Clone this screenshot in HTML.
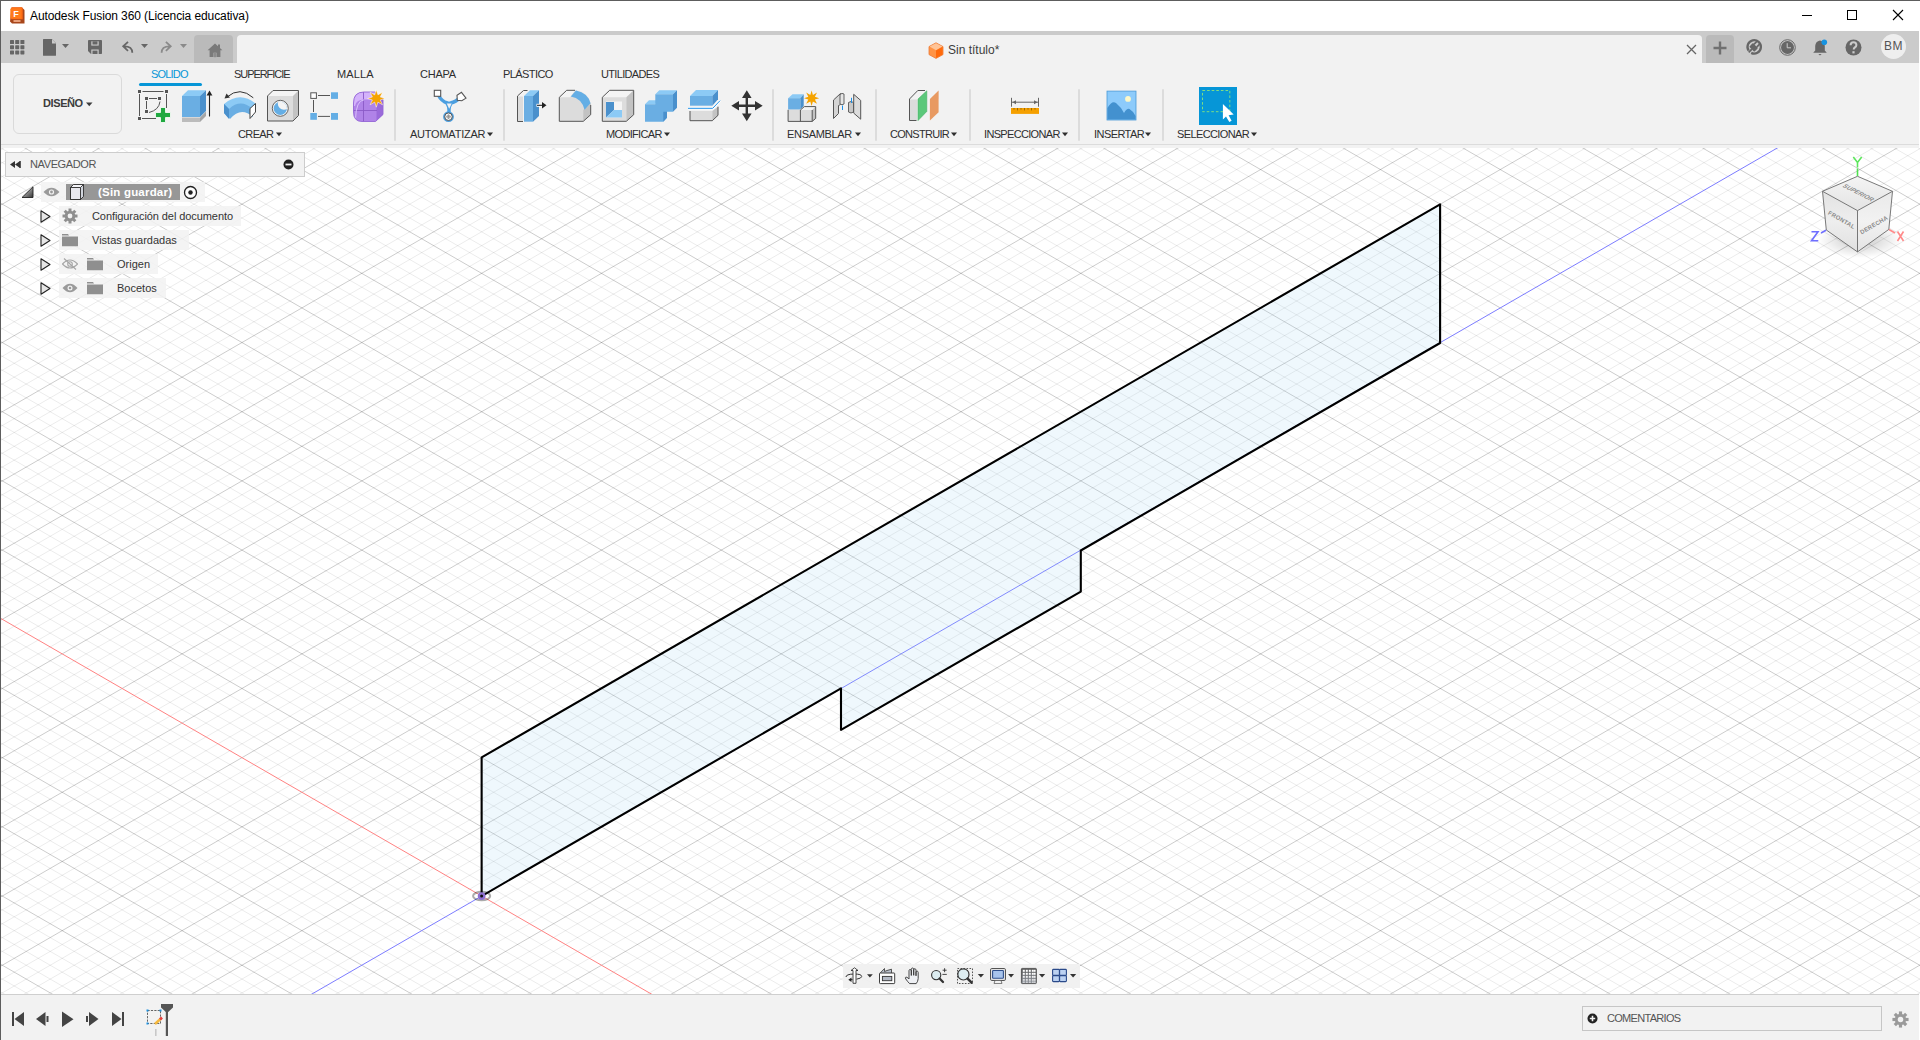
<!DOCTYPE html>
<html><head><meta charset="utf-8">
<style>
*{box-sizing:border-box;margin:0;padding:0}
html,body{width:1920px;height:1040px;overflow:hidden;background:#fff;font-family:"Liberation Sans",sans-serif;color:#2e2e2e}
.a{position:absolute}
#titlebar{left:0;top:0;width:1920px;height:31px;background:#fff;border-top:1px solid #5d5d5d;border-left:1px solid #5d5d5d}
#tabbar{left:1px;top:31px;width:1918px;height:32px;background:#cbcbcb}
#toolbar{left:1px;top:63px;width:1918px;height:82px;background:#f2f2f2;border-bottom:1px solid #dcdcdc}
#vpgap{left:1px;top:145px;width:1918px;height:3px;background:#f2f2f2}
#viewport{left:1px;top:148px;width:1919px;height:846px;background:#fff;overflow:hidden}
#bottombar{left:1px;top:994px;width:1918px;height:46px;background:#f2f2f2;border-top:1px solid #cfcfcf}
#leftborder{left:0;top:0;width:1px;height:1040px;background:#5d5d5d}
.t{position:absolute;white-space:nowrap;line-height:1}
</style></head><body>
<div id="titlebar" class="a"></div>
<div id="tabbar" class="a"></div>
<div id="toolbar" class="a"></div>
<div id="vpgap" class="a"></div>
<!-- TITLE BAR -->
<svg class="a" style="left:10px;top:7px" width="15" height="17" viewBox="0 0 15 17">
<path d="M1.5 0.5h10.5l2.5 2.5v13.5h-12.5l-2-2z" fill="#a8461a"/>
<path d="M1.2 1.2q0-1 1-1h9.5q1 0 1 1v11h-11.5z" fill="#ff6a13"/>
<path d="M0.3 2.5q0-1.2 1.2-1.2h9.8v10.2h-11z" fill="#ff7a1a"/>
<text x="6" y="9.8" font-family="Liberation Sans" font-weight="bold" font-size="9" fill="#fff" text-anchor="middle">F</text>
<rect x="3.5" y="13" width="7" height="2" fill="#e9a07a"/>
</svg>
<div class="t" style="left:30px;top:10px;font-size:12px;letter-spacing:-0.1px;color:#000">Autodesk Fusion 360 (Licencia educativa)</div>

<!-- TAB BAR -->
<svg class="a" style="left:10px;top:40px" width="15" height="15" viewBox="0 0 15 15" fill="#666">
<rect x="0" y="0" width="4" height="4" rx=".6"/><rect x="5.2" y="0" width="4" height="4" rx=".6"/><rect x="10.4" y="0" width="4" height="4" rx=".6"/>
<rect x="0" y="5.2" width="4" height="4" rx=".6"/><rect x="5.2" y="5.2" width="4" height="4" rx=".6"/><rect x="10.4" y="5.2" width="4" height="4" rx=".6"/>
<rect x="0" y="10.4" width="4" height="4" rx=".6"/><rect x="5.2" y="10.4" width="4" height="4" rx=".6"/><rect x="10.4" y="10.4" width="4" height="4" rx=".6"/>
</svg>
<svg class="a" style="left:43px;top:39px" width="28" height="17" viewBox="0 0 28 17" fill="#666">
<path d="M0.6 0.1h8.2l4.2 4.2v11.9q0 .6-.6.6h-11.8q-.6 0-.6-.6v-15.5q0-.6.6-.6z"/>
<path d="M9 0.2v4.2h4.2" fill="#cbcbcb"/>
<path d="M19 5h7l-3.5 4z"/>
</svg>
<svg class="a" style="left:88px;top:40px" width="15" height="15" viewBox="0 0 15 15" fill="#666">
<path d="M0 0.8q0-.8.8-.8h12.4q.8 0 .8.8v12.4q0 .8-.8.8h-10.2l-3-3z"/>
<rect x="3.3" y="1.3" width="7.4" height="4.3" fill="#cbcbcb"/><rect x="4.5" y="1.3" width="5" height="3.2" fill="#666"/>
<rect x="3.3" y="9.5" width="7.4" height="4.5" fill="#cbcbcb"/><rect x="4.5" y="10.6" width="5" height="3.4" fill="#666"/>
</svg>
<svg class="a" style="left:120px;top:40px" width="30" height="15" viewBox="0 0 30 15">
<path d="M12.3 12.8q0-6.5-8-6.5M8 1.8l-4.8 4.5 4.8 4.5" fill="none" stroke="#666" stroke-width="1.8"/>
<path d="M21 4h7l-3.5 4z" fill="#666"/>
</svg>
<svg class="a" style="left:160px;top:40px" width="30" height="15" viewBox="0 0 30 15">
<path d="M1.6 12.8q0-6.5 8-6.5M5.9 1.8l4.8 4.5-4.8 4.5" fill="none" stroke="#8a8a8a" stroke-width="1.8"/>
<path d="M20 4h7l-3.5 4z" fill="#8a8a8a"/>
</svg>
<div class="a" style="left:194px;top:35px;width:39px;height:28px;background:#bababa;border-radius:4px 4px 0 0"></div>
<svg class="a" style="left:207px;top:43px" width="16" height="15" viewBox="0 0 16 15" fill="#7a7a7a">
<path d="M8 0.6l7.4 6.6h-2v6.9h-3.9v-4.3h-3v4.3h-3.9v-6.9h-2z"/><rect x="11" y="1.5" width="2" height="3.5"/><rect x="6.8" y="10" width="2.4" height="4.2" fill="#8c8c8c"/>
</svg>
<div class="a" style="left:237px;top:35px;width:1465px;height:28px;background:#f2f2f2;border-radius:4px 4px 0 0"></div>
<svg class="a" style="left:928px;top:41.5px" width="16" height="17" viewBox="0 0 16 17">
<path d="M8 0.8l7 3.8v8l-7 3.8-7-3.8v-8z" fill="#ff9446" stroke="#ec7a36" stroke-width="0.8"/>
<path d="M8 1.2l6.4 3.4-6.4 3.6-6.4-3.6z" fill="#ffc497"/>
<path d="M8 8.4v7.7l6.6-3.6v-7.7z" fill="#ff6a0c"/>
</svg>
<div class="t" style="left:948px;top:44px;font-size:12px;color:#3c3c3c">Sin título*</div>
<svg class="a" style="left:1686px;top:44px" width="11" height="11" viewBox="0 0 11 11"><path d="M1 1L10 10M10 1L1 10" stroke="#666" stroke-width="1.3"/></svg>
<div class="a" style="left:1706px;top:35px;width:28px;height:28px;background:#bababa;border-radius:4px 4px 0 0"></div>
<svg class="a" style="left:1713px;top:41px" width="14" height="14" viewBox="0 0 14 14"><path d="M7 0.5v13M0.5 7h13" stroke="#707070" stroke-width="2.4"/></svg>
<svg class="a" style="left:1745px;top:38px" width="18" height="18" viewBox="0 0 18 18">
<path d="M3.6 12.6A6.7 6.7 0 1 1 6.2 14.9" fill="none" stroke="#666" stroke-width="2.3"/>
<g transform="rotate(45 9 9)"><rect x="5.4" y="7" width="7.2" height="5.2" rx="0.8" fill="#666"/><rect x="6.2" y="2.2" width="1.7" height="5" fill="#666"/><rect x="10.1" y="2.2" width="1.7" height="5" fill="#666"/><rect x="8.1" y="12" width="1.8" height="4.5" fill="#666"/></g>
</svg>
<svg class="a" style="left:1778.5px;top:38.5px" width="17" height="17" viewBox="0 0 17 17">
<circle cx="8.5" cy="8.5" r="7.8" fill="none" stroke="#666" stroke-width="1"/>
<circle cx="8.5" cy="8.5" r="6.5" fill="#666"/>
<path d="M8.2 4.2v4.6h3.8" fill="none" stroke="#cbcbcb" stroke-width="1"/>
</svg>
<svg class="a" style="left:1812px;top:38px" width="18" height="19" viewBox="0 0 18 19">
<path d="M8 2.5q-4.5.8-4.8 5.5v4.5l-2 2.2h13.6l-2-2.2v-4.5q-.3-4.7-4.8-5.5z" fill="#666"/>
<path d="M6.4 16h3.2l-1.6 1.6z" fill="#666"/>
<circle cx="12.3" cy="4.3" r="2.8" fill="#1793e0"/>
</svg>
<svg class="a" style="left:1844.5px;top:38.5px" width="17" height="17" viewBox="0 0 17 17">
<circle cx="8.5" cy="8.5" r="8" fill="#666"/>
<path d="M5.6 6.3q0-3 2.9-3t2.9 2.8q0 1.6-1.6 2.4-1.1.6-1.1 1.9" fill="none" stroke="#cbcbcb" stroke-width="2"/>
<rect x="7.4" y="12.2" width="2.2" height="2.2" fill="#cbcbcb"/>
</svg>
<div class="a" style="left:1881px;top:34px;width:25px;height:25px;border-radius:50%;background:#eeeeee"></div>
<div class="t" style="left:1882px;top:40px;width:23px;text-align:center;font-size:12px;color:#555;letter-spacing:.5px">BM</div>

<!-- TOOLBAR -->
<div class="a" style="left:13px;top:74px;width:109px;height:60px;border:1.5px solid #dadada;border-radius:6px"></div>
<div class="t" style="left:43px;top:98px;font-size:11px;font-weight:bold;letter-spacing:-0.4px;color:#3c3c3c">DISEÑO</div>
<svg class="a" style="left:86px;top:102px" width="7" height="5" viewBox="0 0 7 5"><path d="M0 0.5h6.5l-3.25 3.8z" fill="#3c3c3c"/></svg>
<div class="t" style="left:151px;top:69px;font-size:11px;letter-spacing:-0.8px;color:#0696d7">SOLIDO</div>
<div class="t" style="left:234px;top:69px;font-size:11px;letter-spacing:-1.06px">SUPERFICIE</div>
<div class="t" style="left:337px;top:69px;font-size:11px;letter-spacing:0.13px">MALLA</div>
<div class="t" style="left:420px;top:69px;font-size:11px;letter-spacing:-0.25px">CHAPA</div>
<div class="t" style="left:503px;top:69px;font-size:11px;letter-spacing:-0.57px">PLÁSTICO</div>
<div class="t" style="left:601px;top:69px;font-size:11px;letter-spacing:-0.67px">UTILIDADES</div>
<div class="a" style="left:139px;top:83px;width:63px;height:3px;background:#0696d7;border-radius:1.5px"></div>
<div class="t" style="left:238px;top:129px;font-size:11px;letter-spacing:-0.63px">CREAR</div>
<svg class="a" style="left:276.25px;top:131.5px" width="7" height="5" viewBox="0 0 7 5"><path d="M0 0.5h6l-3 3.7z" fill="#2e2e2e"/></svg>
<div class="t" style="left:410px;top:129px;font-size:11px;letter-spacing:-0.23px">AUTOMATIZAR</div>
<svg class="a" style="left:487.20px;top:131.5px" width="7" height="5" viewBox="0 0 7 5"><path d="M0 0.5h6l-3 3.7z" fill="#2e2e2e"/></svg>
<div class="t" style="left:606px;top:129px;font-size:11px;letter-spacing:-0.67px">MODIFICAR</div>
<svg class="a" style="left:663.60px;top:131.5px" width="7" height="5" viewBox="0 0 7 5"><path d="M0 0.5h6l-3 3.7z" fill="#2e2e2e"/></svg>
<div class="t" style="left:787px;top:129px;font-size:11px;letter-spacing:-0.32px">ENSAMBLAR</div>
<svg class="a" style="left:854.50px;top:131.5px" width="7" height="5" viewBox="0 0 7 5"><path d="M0 0.5h6l-3 3.7z" fill="#2e2e2e"/></svg>
<div class="t" style="left:890px;top:129px;font-size:11px;letter-spacing:-0.71px">CONSTRUIR</div>
<svg class="a" style="left:951.20px;top:131.5px" width="7" height="5" viewBox="0 0 7 5"><path d="M0 0.5h6l-3 3.7z" fill="#2e2e2e"/></svg>
<div class="t" style="left:984px;top:129px;font-size:11px;letter-spacing:-0.67px">INSPECCIONAR</div>
<svg class="a" style="left:1061.60px;top:131.5px" width="7" height="5" viewBox="0 0 7 5"><path d="M0 0.5h6l-3 3.7z" fill="#2e2e2e"/></svg>
<div class="t" style="left:1094px;top:129px;font-size:11px;letter-spacing:-0.56px">INSERTAR</div>
<svg class="a" style="left:1145.30px;top:131.5px" width="7" height="5" viewBox="0 0 7 5"><path d="M0 0.5h6l-3 3.7z" fill="#2e2e2e"/></svg>
<div class="t" style="left:1177px;top:129px;font-size:11px;letter-spacing:-0.62px">SELECCIONAR</div>
<svg class="a" style="left:1251.00px;top:131.5px" width="7" height="5" viewBox="0 0 7 5"><path d="M0 0.5h6l-3 3.7z" fill="#2e2e2e"/></svg>
<div class="a" style="left:394px;top:89px;width:2px;height:52px;background:#dcdcdc;border-radius:1px"></div>
<div class="a" style="left:503px;top:89px;width:2px;height:52px;background:#dcdcdc;border-radius:1px"></div>
<div class="a" style="left:772px;top:89px;width:2px;height:52px;background:#dcdcdc;border-radius:1px"></div>
<div class="a" style="left:875px;top:89px;width:2px;height:52px;background:#dcdcdc;border-radius:1px"></div>
<div class="a" style="left:969px;top:89px;width:2px;height:52px;background:#dcdcdc;border-radius:1px"></div>
<div class="a" style="left:1078px;top:89px;width:2px;height:52px;background:#dcdcdc;border-radius:1px"></div>
<div class="a" style="left:1162px;top:89px;width:2px;height:52px;background:#dcdcdc;border-radius:1px"></div>
<!-- ICONS -->
<svg class="a" style="left:0;top:63px" width="1300" height="82" viewBox="0 63 1300 82">
<!-- sketch -->
<g fill="#555">
<rect x="138" y="90" width="3" height="3"/><rect x="165" y="90" width="3" height="3"/><rect x="138" y="117" width="3" height="3"/>
<rect x="145" y="97" width="3" height="3"/><rect x="158" y="97" width="3" height="3"/><rect x="145" y="110" width="3" height="3"/>
</g>
<path d="M142.5 91.5H163.5M139.5 94V116M166.5 94V108M142 118.5H156M149 98.5H157M146.5 101V109M160 101.5Q159 110 149 112.5" fill="none" stroke="#555" stroke-width="1"/>
<path d="M160.5 107.5h5v5h5v5h-5v5h-5v-5h-5v-5h5z" fill="#1fa83f" stroke="#fff" stroke-width="0.8"/>
<!-- extrude -->
<path d="M182 96L188 90.2H206L200 96Z" fill="#8ccaf5"/>
<path d="M182 96H200V117H182Z" fill="#6aaee3"/>
<path d="M200 96L206 90.2V111L200 117Z" fill="#4a90cc"/>
<path d="M182 117.5H200V122H182Z" fill="#bcbcbc"/>
<path d="M200 117.5L206 111.5V116L200 122Z" fill="#a5a5a5"/>
<path d="M209.5 116.5V94" stroke="#222" stroke-width="1.1"/>
<path d="M206.6 95.5L209.5 90.5L212.4 95.5Z" fill="#222"/>
<!-- revolve -->
<path d="M253.3 97.8Q240 86 227 97" fill="none" stroke="#333" stroke-width="1"/>
<path d="M224.5 98.5L226.5 93.5L230 97.5Z" fill="#333"/>
<path d="M224 104Q240 91 255.5 103.5L253 112Q241 100 229 112.5L224 108Z" fill="#8ccaf5"/>
<path d="M224 104L229 109Q241 98 253 109.5V117Q241 106 230 119L224 113Z" fill="#6aaee3"/>
<path d="M224 104L229 109V119L224 113Z" fill="#4a90cc"/>
<path d="M250 108.5L255.5 103.5V112L250 118.5Z" fill="#fff" stroke="#444" stroke-width="1"/>
<!-- hole -->
<path d="M267.5 96L273 90.5H298.5L293 96Z" fill="#f4f4f4"/>
<path d="M267.5 96H293V121H267.5Z" fill="#dcdcdc"/>
<path d="M293 96L298.5 90.5V115.5L293 121Z" fill="#c3c3c3"/>
<path d="M267.5 96L273 90.5H298.5V115.5L293 121H267.5Z" fill="none" stroke="#555" stroke-width="1" stroke-linejoin="round"/>
<circle cx="280.3" cy="108.3" r="8" fill="#f4f4f4" stroke="#555" stroke-width="0.9"/>
<clipPath id="hc"><circle cx="280.3" cy="108.3" r="6.6"/></clipPath>
<circle cx="280.3" cy="108.3" r="6.6" fill="#64aee5"/>
<circle cx="284" cy="103.6" r="6.2" fill="#f4f4f4" clip-path="url(#hc)"/>
<!-- pattern -->
<path d="M318 95.5H330M318 116.4H330M313.5 100V112" stroke="#555" stroke-width="1"/>
<rect x="310.8" y="92.8" width="5.6" height="5.6" fill="#fff" stroke="#555" stroke-width="1"/>
<rect x="331" y="92.3" width="7" height="6.6" fill="#64aee5"/>
<rect x="310.3" y="113" width="6.6" height="6.8" fill="#64aee5"/>
<rect x="331" y="113" width="7" height="6.8" fill="#64aee5"/>
<!-- form -->
<clipPath id="fc"><path d="M353.5 103Q353.5 92 364 92H375L383 99.5V114.5L375.5 121.5H362Q353.5 121.5 353.5 112Z"/></clipPath>
<g clip-path="url(#fc)">
<rect x="352" y="91" width="33" height="32" fill="#b083e8"/>
<path d="M352 91H385V99.5H364Q356 99.5 355 106L352 106Z" fill="#d4b3fb"/>
<path d="M376.5 99.5H385V123H376.5Z" fill="#9a6ad9"/>
<path d="M363.5 91V123M352 110.5H377" stroke="#8a5ac6" stroke-width="0.9"/>
<path d="M355.5 119Q356 100.5 364 99.8" fill="none" stroke="#d8c0fa" stroke-width="1"/>
</g>
<path d="M353.5 103Q353.5 92 364 92H375L383 99.5V114.5L375.5 121.5H362Q353.5 121.5 353.5 112Z" fill="none" stroke="#9366d6" stroke-width="0.9"/>
<path d="M376.3 89.8L377.9 94.9L382.5 92.2L380.2 97L385 98.5L380.2 100L382.5 104.8L377.9 102.1L376.3 107.2L374.7 102.1L370.1 104.8L372.4 100L367.6 98.5L372.4 97L370.1 92.2L374.7 94.9Z" fill="#f5a300" stroke="#fff" stroke-width="0.5"/>
<!-- automatizar -->
<path d="M438 94.5Q441.5 101.5 447.5 103M460 97.5Q456 102 450.5 103M449 104V113" fill="none" stroke="#4c9fe0" stroke-width="3.4"/>
<path d="M444.5 101.5H453.5L449 112Z" fill="#4c9fe0"/>
<path d="M446.7 103.4H451.7L449.2 108.7Z" fill="#f2f2f2"/>
<circle cx="448.5" cy="116.7" r="5.4" fill="#4c9fe0"/>
<circle cx="448.5" cy="116.7" r="3.8" fill="#f4f4f4" stroke="#555" stroke-width="1"/>
<circle cx="448.5" cy="116.7" r="1.6" fill="none" stroke="#777" stroke-width="0.6"/>
<path d="M448.5 114.5v4.4M446.3 116.7h4.4" stroke="#777" stroke-width="0.6"/>
<rect x="434.3" y="90.3" width="6.4" height="6" fill="#fff" stroke="#555" stroke-width="1.1"/>
<path d="M461.5 92.3L466 98.2L461.8 100.8L457.3 100.2L457 95.2Z" fill="#fff" stroke="#555" stroke-width="1.1"/>
<!-- press pull -->
<path d="M527.5 90.5H523.5L517.5 96V121.5H523" fill="none" stroke="#555" stroke-width="1"/>
<rect x="518" y="96.5" width="5" height="24.5" fill="#dcdcdc"/>
<path d="M524 96L530 90.3H539L533 96Z" fill="#8ccaf5"/>
<path d="M524 96H533V121.7H524Z" fill="#6aaee3"/>
<path d="M533 96L539 90.3V116L533 121.7Z" fill="#4a90cc"/>
<path d="M536.5 105.3H542" stroke="#fff" stroke-width="3"/>
<path d="M537 105.3H543" stroke="#222" stroke-width="1.1"/>
<path d="M542 102L546.5 105.3L542 108.6Z" fill="#222"/>
<!-- fillet -->
<path d="M559.3 97.3L566.7 90.3H575.3Q588 92 590.7 103.3V114.7L583.3 121.3H559.3Z" fill="#dcdcdc"/>
<path d="M559.3 97.3L566.7 90.3H575.3L570 97.3Z" fill="#f4f4f4"/>
<path d="M583.3 110L590.7 103.3V114.7L583.3 121.3Z" fill="#c3c3c3"/>
<path d="M570.8 96.5L576 90.5Q588 93 590.5 103.3L584.5 109.8Q582 98.5 570.8 96.5Z" fill="#64aee5"/>
<path d="M566.7 90.3H575M590.7 105V114.7L583.3 121.3H559.3V97.3L566.7 90.3" fill="none" stroke="#555" stroke-width="1"/>
<!-- shell -->
<path d="M602.3 97.3L609.7 90.3H633.7L626.3 97.3Z" fill="#f4f4f4"/>
<path d="M602.3 97.3H626.3V121.3H602.3Z" fill="#dcdcdc"/>
<path d="M626.3 97.3L633.7 90.3V114.7L626.3 121.3Z" fill="#c3c3c3"/>
<rect x="606" y="101.5" width="16" height="16" fill="#f4f4f4"/>
<path d="M606 102H614V110L606 117.5Z" fill="#4a90cc"/>
<path d="M606 117.5L614 110H622V117.5Z" fill="#8ccaf5"/>
<path d="M602.3 97.3L609.7 90.3H633.7V114.7L626.3 121.3H602.3Z" fill="none" stroke="#555" stroke-width="1"/>
<!-- combine -->
<path d="M645 104.3L649 100.3H659L655 104.3ZM655.3 94.3L659.3 90.3H677L673 94.3Z" fill="#8ccaf5"/>
<path d="M645 104.3H655.3V94.3H673V111.7H667V117.7L663.3 121.7H645Z" fill="#6aaee3"/>
<path d="M673 94.3L677 90.3V107.7L673 111.7ZM663.3 111.7H667V117.7L663.3 121.7Z" fill="#4a90cc"/>
<!-- split -->
<path d="M690 96L696 90.1H718L712.3 96Z" fill="#8ccaf5"/>
<path d="M690 96H712.3V105.7H690Z" fill="#6aaee3"/>
<path d="M712.3 96L718 90.1V99.3L712.3 105.7Z" fill="#4a90cc"/>
<path d="M688 108.3H712.7L720 100.7" fill="none" stroke="#fff" stroke-width="2.6"/>
<path d="M688 108.3H712.7L720 100.7" fill="none" stroke="#1e90e8" stroke-width="1"/>
<path d="M690 111H712.3V120.7H690Z" fill="#dcdcdc"/>
<path d="M712.3 111L718 106.7V115.3L712.3 120.7Z" fill="#c3c3c3"/>
<path d="M690 111V120.7H712.3L718 115.3V106.7" fill="none" stroke="#555" stroke-width="1"/>
<!-- move -->
<path d="M746.8 95V116.5M736 105.8H757.5" stroke="#333" stroke-width="2.4"/>
<path d="M746.8 90.3L751.6 98H742ZM746.8 121.3L751.6 113.6H742ZM731.3 105.8L739 101V110.6ZM762.7 105.8L755 101V110.6Z" fill="#333"/>
<!-- new component -->
<path d="M788.1 98.2L792.5 94.3H803.7L800.4 98.2Z" fill="#8ccaf5"/>
<path d="M788.1 98.2H800.4V109.6H788.1Z" fill="#6aaee3"/>
<path d="M800.4 98.2L803.7 94.3V106.1L800.4 109.6Z" fill="#4a90cc"/>
<path d="M788.1 109.8H800.4V121.4H788.1ZM800.4 110H812.2V121.4H800.4Z" fill="#dcdcdc"/>
<path d="M800.4 110L804.3 106.6H815.7L812.2 110Z" fill="#f4f4f4"/>
<path d="M812.2 110L815.7 106.6V118.4L812.2 121.4Z" fill="#c3c3c3"/>
<path d="M788.1 109.8V121.4H812.2L815.7 118.4V106.6H804.3L800.4 110V121.4M812.2 110V121.4" fill="none" stroke="#555" stroke-width="1"/>
<path d="M811.6 90.5L812.9 95L817 92.6L814.9 96.8L819.2 98.2L814.9 99.6L817 103.8L812.9 101.4L811.6 106L810.3 101.4L806.2 103.8L808.3 99.6L804 98.2L808.3 96.8L806.2 92.6L810.3 95Z" fill="#f5a300"/>
<!-- joint -->
<path d="M833.5 100L840.5 93.5V104.5L838.5 105.5V113.5L833.5 118.5Z" fill="#d5d5d5" stroke="#555" stroke-width="1" stroke-linejoin="round"/>
<path d="M840 94.5Q842 92.5 844 94V104Q842 105.5 840 104Z" fill="#e6e6e6" stroke="#555" stroke-width="0.9"/>
<path d="M842.5 105.5V110" stroke="#1e90e8" stroke-width="1"/>
<path d="M853.7 94.3L860.7 100.4V119.2L853.7 113.1Z" fill="#dcdcdc" stroke="#555" stroke-width="1" stroke-linejoin="round"/>
<path d="M848.5 102.5Q851 100.5 853.5 102.5V112Q851 114 848.5 112Z" fill="#c8c8c8" stroke="#555" stroke-width="0.9"/>
<path d="M851.5 97.8V103" stroke="#1e90e8" stroke-width="1"/>
<!-- construir -->
<path d="M925 90.5H917.8L909.5 99V120.5H916.5" fill="none" stroke="#555" stroke-width="1"/>
<rect x="910" y="99.5" width="7" height="20.5" fill="#dcdcdc"/>
<path d="M918 99.1L926.8 90.8V111.4L918 120.6Z" fill="#5bc87a" stroke="#48b066" stroke-width="0.6"/>
<path d="M929.9 99.1L938.6 90.4V112.2L929.9 120.6Z" fill="#e89a62"/>
<!-- inspect -->
<rect x="1011" y="108" width="28" height="5.9" fill="#f5a000"/>
<path d="M1014 108v1.6M1017.5 108v2.4M1021 108v1.6M1024.5 108v2.4M1028 108v1.6M1031.5 108v2.4M1035 108v1.6" stroke="#7a5200" stroke-width="0.7"/>
<path d="M1011.5 97.8V106.7M1038.5 97.8V106.7M1012 102.2H1038" stroke="#666" stroke-width="1"/>
<path d="M1012.5 102.2L1016 100.2V104.2ZM1037.5 102.2L1034 100.2V104.2Z" fill="#666"/>
<!-- insert -->
<rect x="1107" y="91.1" width="29" height="28.9" fill="#8dcbfb" stroke="#4a9ad8" stroke-width="0.8"/>
<path d="M1107.4 108Q1112 100 1116 103Q1121 107 1124 113Q1127 108 1129.5 109Q1133 111 1135.6 116V119.6H1107.4Z" fill="#4391cf"/>
<circle cx="1128" cy="98.9" r="2.9" fill="#fdf8c8"/>
<!-- select -->
<rect x="1199" y="87" width="38" height="38" fill="#0696d7"/>
<rect x="1202.5" y="90.5" width="27.3" height="21.2" fill="none" stroke="#7ddd84" stroke-width="1" stroke-dasharray="2.6 2"/>
<path d="M1222.9 104.1V119.5L1226 116.5L1229.3 122L1231.6 120.8L1228.6 115.2L1233.7 114.6Z" fill="#fff"/>
</svg>
<!-- /ICONS -->
<!-- window controls -->
<div class="a" style="left:1802px;top:15px;width:10px;height:1px;background:#000"></div>
<div class="a" style="left:1847px;top:10px;width:10px;height:10px;border:1px solid #000"></div>
<svg class="a" style="left:1892px;top:9px" width="12" height="12" viewBox="0 0 12 12"><path d="M1 1L11 11M11 1L1 11" stroke="#000" stroke-width="1.1"/></svg>

<div id="viewport" class="a">
<svg width="1919" height="846" viewBox="1 148 1919 846" style="position:absolute;left:0;top:0">
<path id="gminorA" fill="none" stroke="rgba(0,0,0,0.08)" stroke-width="1" d="M0 -959.56 L1920 148.95M0 -945.72 L1920 162.79M0 -931.88 L1920 176.63M0 -918.05 L1920 190.47M0 -890.37 L1920 218.14M0 -876.53 L1920 231.98M0 -862.69 L1920 245.82M0 -848.86 L1920 259.66M0 -821.18 L1920 287.33M0 -807.34 L1920 301.17M0 -793.5 L1920 315.01M0 -779.67 L1920 328.85M0 -751.99 L1920 356.52M0 -738.15 L1920 370.36M0 -724.31 L1920 384.2M0 -710.48 L1920 398.04M0 -682.8 L1920 425.71M0 -668.96 L1920 439.55M0 -655.12 L1920 453.39M0 -641.29 L1920 467.23M0 -613.61 L1920 494.9M0 -599.77 L1920 508.74M0 -585.94 L1920 522.58M0 -572.1 L1920 536.42M0 -544.42 L1920 564.09M0 -530.58 L1920 577.93M0 -516.75 L1920 591.77M0 -502.91 L1920 605.61M0 -475.23 L1920 633.28M0 -461.39 L1920 647.12M0 -447.56 L1920 660.96M0 -433.72 L1920 674.79M0 -406.04 L1920 702.47M0 -392.2 L1920 716.31M0 -378.37 L1920 730.15M0 -364.53 L1920 743.98M0 -336.85 L1920 771.66M0 -323.01 L1920 785.5M0 -309.18 L1920 799.34M0 -295.34 L1920 813.17M0 -267.66 L1920 840.85M0 -253.82 L1920 854.69M0 -239.99 L1920 868.53M0 -226.15 L1920 882.36M0 -198.47 L1920 910.04M0 -184.63 L1920 923.88M0 -170.8 L1920 937.72M0 -156.96 L1920 951.55M0 -129.28 L1920 979.23M0 -115.45 L1920 993.07M0 -101.61 L1920 1006.91M0 -87.77 L1920 1020.74M0 -60.09 L1920 1048.42M0 -46.26 L1920 1062.26M0 -32.42 L1920 1076.09M0 -18.58 L1920 1089.93M0 9.1 L1920 1117.61M0 22.93 L1920 1131.45M0 36.77 L1920 1145.28M0 50.61 L1920 1159.12M0 78.29 L1920 1186.8M0 92.12 L1920 1200.64M0 105.96 L1920 1214.47M0 119.8 L1920 1228.31M0 147.48 L1920 1255.99M0 161.31 L1920 1269.83M0 175.15 L1920 1283.66M0 188.99 L1920 1297.5M0 216.67 L1920 1325.18M0 230.5 L1920 1339.02M0 244.34 L1920 1352.85M0 258.18 L1920 1366.69M0 285.85 L1920 1394.37M0 299.69 L1920 1408.21M0 313.53 L1920 1422.04M0 327.37 L1920 1435.88M0 355.04 L1920 1463.56M0 368.88 L1920 1477.39M0 382.72 L1920 1491.23M0 396.56 L1920 1505.07M0 424.23 L1920 1532.75M0 438.07 L1920 1546.58M0 451.91 L1920 1560.42M0 465.75 L1920 1574.26M0 493.42 L1920 1601.94M0 507.26 L1920 1615.77M0 521.1 L1920 1629.61M0 534.94 L1920 1643.45M0 562.61 L1920 1671.13M0 576.45 L1920 1684.96M0 590.29 L1920 1698.8M0 604.13 L1920 1712.64M0 631.8 L1920 1740.32M0 645.64 L1920 1754.15M0 659.48 L1920 1767.99M0 673.32 L1920 1781.83M0 700.99 L1920 1809.51M0 714.83 L1920 1823.34M0 728.67 L1920 1837.18M0 742.51 L1920 1851.02M0 770.18 L1920 1878.69M0 784.02 L1920 1892.53M0 797.86 L1920 1906.37M0 811.7 L1920 1920.21M0 839.37 L1920 1947.88M0 853.21 L1920 1961.72M0 867.05 L1920 1975.56M0 880.89 L1920 1989.4M0 908.56 L1920 2017.07M0 922.4 L1920 2030.91M0 936.24 L1920 2044.75M0 950.08 L1920 2058.59M0 977.75 L1920 2086.26M0 991.59 L1920 2100.1"/>
<path id="gminorB" fill="none" stroke="rgba(0,0,0,0.08)" stroke-width="1" d="M0 150.11 L1920 -958.4M0 163.95 L1920 -944.57M0 177.78 L1920 -930.73M0 191.62 L1920 -916.89M0 219.3 L1920 -889.21M0 233.14 L1920 -875.38M0 246.97 L1920 -861.54M0 260.81 L1920 -847.7M0 288.49 L1920 -820.03M0 302.33 L1920 -806.19M0 316.16 L1920 -792.35M0 330 L1920 -778.51M0 357.68 L1920 -750.84M0 371.51 L1920 -737M0 385.35 L1920 -723.16M0 399.19 L1920 -709.32M0 426.87 L1920 -681.65M0 440.7 L1920 -667.81M0 454.54 L1920 -653.97M0 468.38 L1920 -640.13M0 496.06 L1920 -612.46M0 509.89 L1920 -598.62M0 523.73 L1920 -584.78M0 537.57 L1920 -570.94M0 565.25 L1920 -543.27M0 579.08 L1920 -529.43M0 592.92 L1920 -515.59M0 606.76 L1920 -501.75M0 634.44 L1920 -474.08M0 648.27 L1920 -460.24M0 662.11 L1920 -446.4M0 675.95 L1920 -432.56M0 703.63 L1920 -404.89M0 717.46 L1920 -391.05M0 731.3 L1920 -377.21M0 745.14 L1920 -363.37M0 772.81 L1920 -335.7M0 786.65 L1920 -321.86M0 800.49 L1920 -308.02M0 814.33 L1920 -294.18M0 842 L1920 -266.51M0 855.84 L1920 -252.67M0 869.68 L1920 -238.83M0 883.52 L1920 -224.99M0 911.19 L1920 -197.32M0 925.03 L1920 -183.48M0 938.87 L1920 -169.64M0 952.71 L1920 -155.8M0 980.38 L1920 -128.13M0 994.22 L1920 -114.29M0 1008.06 L1920 -100.45M0 1021.9 L1920 -86.61M0 1049.57 L1920 -58.94M0 1063.41 L1920 -45.1M0 1077.25 L1920 -31.26M0 1091.09 L1920 -17.43M0 1118.76 L1920 10.25M0 1132.6 L1920 24.09M0 1146.44 L1920 37.93M0 1160.28 L1920 51.76M0 1187.95 L1920 79.44M0 1201.79 L1920 93.28M0 1215.63 L1920 107.12M0 1229.47 L1920 120.95M0 1257.14 L1920 148.63M0 1270.98 L1920 162.47M0 1284.82 L1920 176.31M0 1298.66 L1920 190.14M0 1326.33 L1920 217.82M0 1340.17 L1920 231.66M0 1354.01 L1920 245.5M0 1367.85 L1920 259.33M0 1395.52 L1920 287.01M0 1409.36 L1920 300.85M0 1423.2 L1920 314.69M0 1437.04 L1920 328.52M0 1464.71 L1920 356.2M0 1478.55 L1920 370.04M0 1492.39 L1920 383.87M0 1506.23 L1920 397.71M0 1533.9 L1920 425.39M0 1547.74 L1920 439.23M0 1561.58 L1920 453.06M0 1575.41 L1920 466.9M0 1603.09 L1920 494.58M0 1616.93 L1920 508.42M0 1630.77 L1920 522.25M0 1644.6 L1920 536.09M0 1672.28 L1920 563.77M0 1686.12 L1920 577.61M0 1699.96 L1920 591.44M0 1713.79 L1920 605.28M0 1741.47 L1920 632.96M0 1755.31 L1920 646.8M0 1769.15 L1920 660.63M0 1782.98 L1920 674.47M0 1810.66 L1920 702.15M0 1824.5 L1920 715.99M0 1838.34 L1920 729.82M0 1852.17 L1920 743.66M0 1879.85 L1920 771.34M0 1893.69 L1920 785.17M0 1907.53 L1920 799.01M0 1921.36 L1920 812.85M0 1949.04 L1920 840.53M0 1962.88 L1920 854.36M0 1976.71 L1920 868.2M0 1990.55 L1920 882.04M0 2018.23 L1920 909.72M0 2032.07 L1920 923.55M0 2045.9 L1920 937.39M0 2059.74 L1920 951.23M0 2087.42 L1920 978.91M0 2101.26 L1920 992.74"/>
<path id="gmajorA" fill="none" stroke="rgba(0,0,0,0.2)" stroke-width="1" d="M0 -904.21 L1920 204.31M0 -835.02 L1920 273.49M0 -765.83 L1920 342.68M0 -696.64 L1920 411.87M0 -627.45 L1920 481.06M0 -558.26 L1920 550.25M0 -489.07 L1920 619.44M0 -419.88 L1920 688.63M0 -350.69 L1920 757.82M0 -281.5 L1920 827.01M0 -212.31 L1920 896.2M0 -143.12 L1920 965.39M0 -73.93 L1920 1034.58M0 -4.74 L1920 1103.77M0 64.45 L1920 1172.96M0 133.64 L1920 1242.15M0 202.83 L1920 1311.34M0 272.02 L1920 1380.53M0 341.21 L1920 1449.72M0 410.4 L1920 1518.91M0 479.59 L1920 1588.1M0 548.78 L1920 1657.29M0 687.15 L1920 1795.67M0 756.34 L1920 1864.86M0 825.53 L1920 1934.05M0 894.72 L1920 2003.24M0 963.91 L1920 2072.43"/>
<path id="gmajorB" fill="none" stroke="rgba(0,0,0,0.2)" stroke-width="1" d="M0 205.46 L1920 -903.05M0 274.65 L1920 -833.86M0 343.84 L1920 -764.67M0 413.03 L1920 -695.48M0 482.22 L1920 -626.29M0 551.41 L1920 -557.1M0 620.6 L1920 -487.91M0 689.79 L1920 -418.73M0 758.98 L1920 -349.54M0 828.17 L1920 -280.35M0 897.36 L1920 -211.16M0 966.55 L1920 -141.97M0 1035.74 L1920 -72.78M0 1104.93 L1920 -3.59M0 1243.3 L1920 134.79M0 1312.49 L1920 203.98M0 1381.68 L1920 273.17M0 1450.87 L1920 342.36M0 1520.06 L1920 411.55M0 1589.25 L1920 480.74M0 1658.44 L1920 549.93M0 1727.63 L1920 619.12M0 1796.82 L1920 688.31M0 1866.01 L1920 757.5M0 1935.2 L1920 826.69M0 2004.39 L1920 895.88M0 2073.58 L1920 965.07"/>
<path id="xaxis" fill="none" stroke="#ff8282" stroke-width="1" d="M0 617.97 L1920 1726.48"/>
<path id="zaxis" fill="none" stroke="#7c7cff" stroke-width="1" d="M0 1174.11 L1920 65.6"/>
<polygon id="face" fill="rgba(160,212,242,0.17)" points="481.64,896.04 481.64,757.4 1440.1,204.4 1440.1,343 1080.8,550.5 1080.8,591.6 841,729.8 841,688.4"/>
<polyline id="edge" fill="none" stroke="#000" stroke-width="2.1" stroke-linejoin="round" points="481.64,896.04 481.64,757.4 1440.1,204.4 1440.1,343 1080.8,550.5 1080.8,591.6 841,729.8 841,688.4 481.64,896.04"/>
<ellipse cx="481.64" cy="896.04" rx="8.6" ry="4.3" fill="none" stroke="rgba(0,0,0,0.33)" stroke-width="2"/>
<circle cx="481.64" cy="896.04" r="3.9" fill="#8d6fd2"/>
<circle cx="481.64" cy="896.04" r="1.5" fill="#111"/>
</svg>
</div>
<div id="bottombar" class="a"></div>


<!-- BOTTOM -->
<svg class="a" style="left:0;top:994px" width="200" height="46" viewBox="0 994 200 46">
<g fill="#444">
<rect x="12" y="1012" width="2" height="14"/><path d="M24 1012V1026L14.5 1019Z"/>
<path d="M36 1019L45.5 1012V1026Z"/><rect x="46.5" y="1016" width="2" height="6"/>
<path d="M62 1011.5V1027L73.5 1019.2Z"/>
<rect x="86" y="1016" width="2" height="6"/><path d="M89 1012V1026L98.5 1019Z"/>
<path d="M112 1012V1026L121.5 1019Z"/><rect x="122" y="1012" width="2" height="14"/>
</g>
<rect x="147.5" y="1010.5" width="13" height="13" fill="none" stroke="#555" stroke-width="0.9" stroke-dasharray="2.2 1.2"/>
<g fill="#1a8fe0"><rect x="146.5" y="1009.5" width="2" height="2"/><rect x="159.5" y="1009.5" width="2" height="2"/><rect x="146.5" y="1022.5" width="2" height="2"/></g>
<path d="M155 1024L161 1018.5" stroke="#f5b83d" stroke-width="2.6"/>
<path d="M160 1019.5L162 1017.5" stroke="#e84040" stroke-width="2.6"/>
<rect x="155" y="1029" width="1.6" height="7" fill="#c8c8c8"/>
<path d="M161 1004H173V1007.5L168.2 1012H165.8L161 1007.5Z" fill="#555"/>
<rect x="165.8" y="1011" width="2.2" height="25" fill="#555"/>
</svg>
<div class="a" style="left:1582px;top:1006px;width:300px;height:25px;border:1px solid #c6c6c6;background:#f2f2f2"></div>
<svg class="a" style="left:1587px;top:1013px" width="11" height="11" viewBox="0 0 11 11"><circle cx="5.5" cy="5.5" r="5" fill="#222"/><path d="M5.5 2.8V8.2M2.8 5.5H8.2" stroke="#f2f2f2" stroke-width="1.6"/></svg>
<div class="t" style="left:1607px;top:1013px;font-size:11px;color:#555;letter-spacing:-0.7px">COMENTARIOS</div>
<svg class="a" style="left:1892px;top:1011px" width="17" height="17" viewBox="0 0 16 16"><g fill="#9a9a9a"><circle cx="8" cy="8" r="5.3"/><rect x="6.5" y="0.4" width="3" height="15.2"/><rect x="0.4" y="6.5" width="15.2" height="3"/><rect x="6.5" y="0.4" width="3" height="15.2" transform="rotate(45 8 8)"/><rect x="6.5" y="0.4" width="3" height="15.2" transform="rotate(-45 8 8)"/></g><circle cx="8" cy="8" r="2.6" fill="#f2f2f2"/></svg>
<!-- NAVBAR -->
<div class="a" style="left:843px;top:964px;width:237px;height:24px;background:rgba(240,240,240,0.95)"></div>
<svg class="a" style="left:843px;top:964px" width="237" height="24" viewBox="843 964 237 24">
<!-- orbit -->
<path d="M861.5 976.5Q862 974 854 974Q846 974.2 846 977" fill="none" stroke="#333" stroke-width="1"/>
<path d="M853 970.5V983.3H856V970.5H858L854.5 967.8L851 970.5Z" fill="#fff" stroke="#333" stroke-width="0.9" stroke-linejoin="round"/>
<path d="M856.5 979.2Q861.5 978.3 861.8 976.6M852.5 979.6L850 979.6" fill="none" stroke="#333" stroke-width="1"/>
<path d="M848.3 979.7L851.5 977.5V982Z" fill="#222"/>
<path d="M867 974.2h5.8l-2.9 3.2z" fill="#333"/>
<!-- look at -->
<path d="M880 973.2L884.5 968.5V971.5L887 970.5L891.5 969.2V973" fill="#b9c0cc" stroke="#444" stroke-width="0.9" stroke-linejoin="round"/>
<rect x="879.5" y="973" width="15.2" height="10.6" rx="0.8" fill="#fff" stroke="#3c3c3c" stroke-width="1"/>
<rect x="882.4" y="976.4" width="9.4" height="4.3" fill="#b4bac6" stroke="#333" stroke-width="0.9"/>
<!-- pan -->
<path d="M909.6 983.6Q907.5 981.5 905.8 979Q904.8 977.6 905.8 977.2Q906.8 976.8 908.2 978.2L909 979V970.6Q909.3 969.2 910.4 969.5Q911.2 969.8 911.3 971V975.5V969.2Q911.5 968 912.6 968Q913.6 968.1 913.7 969.2V975.3V969.7Q913.9 968.6 914.9 968.7Q915.9 968.9 916 970V975.8V972Q916.3 971 917.2 971.1Q918.2 971.3 918.2 972.4V978.5Q918 981.5 916.2 983.6Z" fill="#eef0f4" stroke="#333" stroke-width="0.9" stroke-linejoin="round"/>
<!-- zoom -->
<circle cx="936.2" cy="975.1" r="4.6" fill="#dcecf0" stroke="#333" stroke-width="1.1"/>
<path d="M939.6 978.5L943 982" stroke="#333" stroke-width="2.3" stroke-linecap="round"/>
<path d="M944.6 968.2V972.2M942.6 970.2H946.6M942.4 974.4H946.8" stroke="#333" stroke-width="0.9"/>
<!-- zoom window -->
<rect x="957.5" y="968.5" width="15" height="15" fill="none" stroke="#444" stroke-width="0.9" stroke-dasharray="1.6 1.4"/>
<circle cx="963.4" cy="974.4" r="5.6" fill="#dcecf0" stroke="#333" stroke-width="1.2"/>
<path d="M967.6 978.6L971.6 982.6" stroke="#333" stroke-width="2.5" stroke-linecap="round"/>
<path d="M977.8 974h6.2l-3.1 3.5z" fill="#333"/>
<!-- display -->
<rect x="990.6" y="968.6" width="14.8" height="11.8" rx="1" fill="#f4f4f4" stroke="#444" stroke-width="1"/>
<rect x="992.6" y="970.5" width="10.8" height="7.8" rx="0.6" fill="#a8c4ec" stroke="#2f4f8a" stroke-width="1.1"/>
<path d="M995 980.6H1001L1002 983.4H994Z" fill="#fff" stroke="#555" stroke-width="0.8"/>
<path d="M1008.1 974h5.9l-2.95 3.5z" fill="#333"/>
<!-- grid -->
<defs><linearGradient id="gg" x1="0" y1="0" x2="0" y2="1"><stop offset="0" stop-color="#5a5a5a"/><stop offset="1" stop-color="#8a8f98"/></linearGradient></defs>
<rect x="1021.4" y="968.4" width="15" height="15.2" rx="0.8" fill="url(#gg)" stroke="#444" stroke-width="0.8"/>
<g fill="#fff">
<rect x="1022.8" y="969.8" width="2" height="2"/><rect x="1025.8" y="969.8" width="2" height="2"/><rect x="1028.8" y="969.8" width="2" height="2"/><rect x="1031.8" y="969.8" width="2" height="2"/><rect x="1034" y="969.8" width="1.6" height="2"/>
<rect x="1022.8" y="972.8" width="2" height="2"/><rect x="1025.8" y="972.8" width="2" height="2"/><rect x="1028.8" y="972.8" width="2" height="2"/><rect x="1031.8" y="972.8" width="2" height="2"/><rect x="1034" y="972.8" width="1.6" height="2"/>
<rect x="1022.8" y="975.8" width="2" height="2" opacity="0.9"/><rect x="1025.8" y="975.8" width="2" height="2" opacity="0.9"/><rect x="1028.8" y="975.8" width="2" height="2" opacity="0.9"/><rect x="1031.8" y="975.8" width="2" height="2" opacity="0.9"/><rect x="1034" y="975.8" width="1.6" height="2" opacity="0.9"/>
<rect x="1022.8" y="978.8" width="2" height="2" opacity="0.75"/><rect x="1025.8" y="978.8" width="2" height="2" opacity="0.75"/><rect x="1028.8" y="978.8" width="2" height="2" opacity="0.75"/><rect x="1031.8" y="978.8" width="2" height="2" opacity="0.75"/><rect x="1034" y="978.8" width="1.6" height="2" opacity="0.75"/>
<rect x="1022.8" y="981.4" width="2" height="1.6" opacity="0.6"/><rect x="1025.8" y="981.4" width="2" height="1.6" opacity="0.6"/><rect x="1028.8" y="981.4" width="2" height="1.6" opacity="0.6"/><rect x="1031.8" y="981.4" width="2" height="1.6" opacity="0.6"/><rect x="1034" y="981.4" width="1.6" height="1.6" opacity="0.6"/>
</g>
<path d="M1039 974h6.2l-3.1 3.5z" fill="#333"/>
<!-- viewports -->
<g fill="#bcd2f2" stroke="#2a4a8a" stroke-width="1.1">
<rect x="1052.6" y="969.4" width="6.8" height="6" rx="0.8"/><rect x="1059.6" y="969.4" width="6.8" height="6" rx="0.8"/>
<rect x="1052.6" y="975.6" width="6.8" height="6" rx="0.8"/><rect x="1059.6" y="975.6" width="6.8" height="6" rx="0.8"/>
</g>
<path d="M1070 974h6.2l-3.1 3.5z" fill="#333"/>
</svg>
<!-- /BOTTOM -->
<!-- VIEWCUBE -->
<svg class="a" style="left:1800px;top:150px" width="120" height="110" viewBox="1800 150 120 110">
<defs>
<radialGradient id="shd" cx="0.5" cy="0.5" r="0.5"><stop offset="0" stop-color="#000" stop-opacity="0.22"/><stop offset="1" stop-color="#000" stop-opacity="0"/></radialGradient>
<linearGradient id="ftop" x1="0" y1="0" x2="0" y2="1"><stop offset="0" stop-color="#f4f4f4"/><stop offset="1" stop-color="#e4e4e4"/></linearGradient>
<linearGradient id="fleft" x1="0" y1="0" x2="0" y2="1"><stop offset="0" stop-color="#e2e2e2"/><stop offset="0.5" stop-color="#eeeeee"/><stop offset="1" stop-color="#e0e0e0"/></linearGradient>
<linearGradient id="fright" x1="0" y1="0" x2="0" y2="1"><stop offset="0" stop-color="#eaeaea"/><stop offset="0.5" stop-color="#f2f2f2"/><stop offset="1" stop-color="#e4e4e4"/></linearGradient>
</defs>
<ellipse cx="1860" cy="240" rx="42" ry="18" fill="url(#shd)"/>
<path d="M1857.5 176.3L1892.5 191.3L1857.5 210.6L1822.5 191.3Z" fill="url(#ftop)"/>
<path d="M1822.5 191.3L1857.5 210.6V251.9L1826.3 230Z" fill="url(#fleft)"/>
<path d="M1892.5 191.3L1857.5 210.6V251.9L1888.8 229.4Z" fill="url(#fright)"/>
<path d="M1857.5 176.3L1892.5 191.3L1888.8 229.4L1857.5 251.9L1826.3 230L1822.5 191.3ZM1822.5 191.3L1857.5 210.6L1892.5 191.3M1857.5 210.6V251.9" fill="none" stroke="#6a6a6a" stroke-width="0.9"/>
<path d="M1857.5 176V168.5" stroke="#4fe04f" stroke-width="1.6"/>
<path d="M1826 230.3L1821 233" stroke="#6f6fff" stroke-width="1.6"/>
<path d="M1889 229.5L1895 233" stroke="#ff8a8a" stroke-width="1.6"/>
<path d="M1853.3 157L1857.5 162.5L1861.7 157M1857.5 162.5V167.5" fill="none" stroke="#5ce65c" stroke-width="1.6"/>
<path d="M1811.5 231.8H1818L1811.5 240.8H1818.3" fill="none" stroke="#6f6fff" stroke-width="1.6"/>
<path d="M1897.5 231.5L1903.5 241M1903.5 231.5L1897.5 241" fill="none" stroke="#ff8a8a" stroke-width="1.6"/>
<g font-family="Liberation Sans" font-size="6" fill="#8a8a8a" font-weight="bold">
<text transform="translate(1842 186.5) rotate(27) skewX(-28)" letter-spacing="0.2">SUPERIOR</text>
<text transform="translate(1827.5 214) rotate(30) skewY(0)" letter-spacing="0.3">FRONTAL</text>
<text transform="translate(1861.5 234.5) rotate(-30)" letter-spacing="0.2">DERECHA</text>
</g>
</svg>
<!-- /VIEWCUBE -->
<!-- NAVIGATOR -->
<div class="a" style="left:5px;top:152px;width:300px;height:25px;background:#f2f2f2;border:1px solid #cdcdcd"></div>
<svg class="a" style="left:10px;top:161px" width="11" height="7" viewBox="0 0 11 7"><path d="M0 3.5L5 0V7ZM5 3.5L10 0V7Z" fill="#333"/><rect x="9.6" y="0" width="1.2" height="7" fill="#333"/></svg>
<div class="t" style="left:30px;top:159px;font-size:11px;color:#555;letter-spacing:-0.38px">NAVEGADOR</div>
<svg class="a" style="left:283px;top:159px" width="11" height="11" viewBox="0 0 11 11"><circle cx="5.5" cy="5.5" r="5" fill="#222"/><rect x="2.5" y="4.6" width="6" height="1.8" fill="#f2f2f2"/></svg>
<!-- row1 -->
<svg class="a" style="left:21px;top:186px" width="13" height="12" viewBox="0 0 13 12"><defs><linearGradient id="tg" x1="0" y1="0" x2="1" y2="1"><stop offset="0" stop-color="#eee"/><stop offset="1" stop-color="#333"/></linearGradient></defs><path d="M1 11.5L12 0.8V11.5Z" fill="url(#tg)" stroke="#222" stroke-width="0.9"/></svg>
<div class="a" style="left:41px;top:182px;width:164px;height:20px;background:rgba(242,242,242,0.85)"></div>
<svg class="a" style="left:43px;top:186px" width="17" height="12" viewBox="0 0 17 12"><path d="M0.5 6Q8.5 -2.5 16.5 6Q8.5 14.5 0.5 6Z" fill="#9a9a9a"/><circle cx="8.5" cy="6" r="2.6" fill="#f2f2f2"/><circle cx="8.5" cy="6" r="1.4" fill="#9a9a9a"/></svg>
<div class="a" style="left:66px;top:184px;width:114px;height:16px;background:#979797"></div>
<svg class="a" style="left:68px;top:183px" width="18" height="18" viewBox="0 0 18 18"><path d="M2.5 4.5L5.5 1.5H15.5V13.5L12.5 16.5H2.5Z" fill="#e8e8ee" stroke="#333" stroke-width="0.9"/><path d="M2.5 4.5H12.5V16.5M12.5 4.5L15.5 1.5" fill="none" stroke="#333" stroke-width="0.9"/><path d="M12.5 4.5L15.5 1.5V13.5L12.5 16.5Z" fill="#d0d4dc"/><path d="M2.5 4.5L5.5 1.5H15.5L12.5 4.5Z" fill="#f4f4f8"/><path d="M2.5 4.5L5.5 1.5H15.5V13.5L12.5 16.5H2.5ZM2.5 4.5H12.5V16.5M12.5 4.5L15.5 1.5" fill="none" stroke="#333" stroke-width="0.9"/></svg>
<div class="t" style="left:98px;top:187px;font-size:11.5px;font-weight:bold;color:#fff;letter-spacing:0.2px">(Sin guardar)</div>
<svg class="a" style="left:183px;top:185px" width="15" height="15" viewBox="0 0 15 15"><circle cx="7.5" cy="7.5" r="6" fill="#fff" stroke="#222" stroke-width="1.3"/><circle cx="7.5" cy="7.5" r="2.2" fill="#222"/></svg>
<!-- row2 -->
<svg class="a" style="left:40px;top:210px" width="11" height="13" viewBox="0 0 11 13"><path d="M1 0.8L10 6.5L1 12.2Z" fill="#e6e6e6" stroke="#222" stroke-width="1.1" stroke-linejoin="round"/></svg>
<div class="a" style="left:59px;top:206px;width:182px;height:20px;background:rgba(242,242,242,0.85)"></div>
<svg class="a" style="left:62px;top:208px" width="16" height="16" viewBox="0 0 16 16"><g fill="#8f8f8f"><circle cx="8" cy="8" r="5.3"/><rect x="6.5" y="0.5" width="3" height="15"/><rect x="0.5" y="6.5" width="15" height="3"/><rect x="6.5" y="0.5" width="3" height="15" transform="rotate(45 8 8)"/><rect x="6.5" y="0.5" width="3" height="15" transform="rotate(-45 8 8)"/></g><circle cx="8" cy="8" r="2.4" fill="#f2f2f2"/></svg>
<div class="t" style="left:92px;top:211px;font-size:11px;color:#333;letter-spacing:-0.08px">Configuración del documento</div>
<!-- row3 -->
<svg class="a" style="left:40px;top:234px" width="11" height="13" viewBox="0 0 11 13"><path d="M1 0.8L10 6.5L1 12.2Z" fill="#e6e6e6" stroke="#222" stroke-width="1.1" stroke-linejoin="round"/></svg>
<div class="a" style="left:59px;top:230px;width:130px;height:20px;background:rgba(242,242,242,0.85)"></div>
<svg class="a" style="left:62px;top:233px" width="16" height="14" viewBox="0 0 16 14"><path d="M0 1h6l1 1.6H0Z M0 3.6H16V13.3H0Z" fill="#8f8f8f"/></svg>
<div class="t" style="left:92px;top:235px;font-size:11px;color:#333">Vistas guardadas</div>
<!-- row4 -->
<svg class="a" style="left:40px;top:258px" width="11" height="13" viewBox="0 0 11 13"><path d="M1 0.8L10 6.5L1 12.2Z" fill="#e6e6e6" stroke="#222" stroke-width="1.1" stroke-linejoin="round"/></svg>
<div class="a" style="left:59px;top:254px;width:99px;height:20px;background:rgba(242,242,242,0.85)"></div>
<svg class="a" style="left:62px;top:258px" width="16" height="12" viewBox="0 0 16 12"><path d="M0.5 6Q8 -2 15.5 6Q8 14 0.5 6Z" fill="none" stroke="#a5a5a5" stroke-width="1.1"/><circle cx="8" cy="6" r="2.3" fill="none" stroke="#a5a5a5" stroke-width="1.1"/><path d="M2 0.5L14 11.5" stroke="#a5a5a5" stroke-width="1.1"/></svg>
<svg class="a" style="left:87px;top:257px" width="16" height="14" viewBox="0 0 16 14"><path d="M0 1h6l1 1.6H0Z M0 3.6H16V13.3H0Z" fill="#8f8f8f"/></svg>
<div class="t" style="left:117px;top:259px;font-size:11px;color:#333">Origen</div>
<!-- row5 -->
<svg class="a" style="left:40px;top:282px" width="11" height="13" viewBox="0 0 11 13"><path d="M1 0.8L10 6.5L1 12.2Z" fill="#e6e6e6" stroke="#222" stroke-width="1.1" stroke-linejoin="round"/></svg>
<div class="a" style="left:59px;top:278px;width:107px;height:20px;background:rgba(242,242,242,0.85)"></div>
<svg class="a" style="left:62px;top:282px" width="16" height="12" viewBox="0 0 16 12"><path d="M0.5 6Q8 -2.5 15.5 6Q8 14.5 0.5 6Z" fill="#9a9a9a"/><circle cx="8" cy="6" r="2.5" fill="#f2f2f2"/><circle cx="8" cy="6" r="1.3" fill="#9a9a9a"/></svg>
<svg class="a" style="left:87px;top:281px" width="16" height="14" viewBox="0 0 16 14"><path d="M0 1h6l1 1.6H0Z M0 3.6H16V13.3H0Z" fill="#8f8f8f"/></svg>
<div class="t" style="left:117px;top:283px;font-size:11px;color:#333">Bocetos</div>
<!-- /NAVIGATOR -->

<div id="leftborder" class="a"></div>
</body></html>
